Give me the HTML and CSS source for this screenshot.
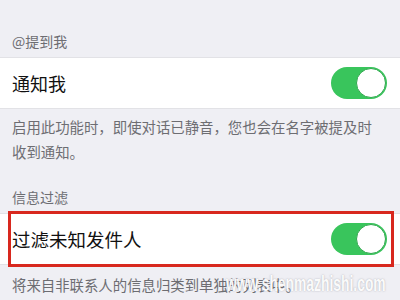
FILE: index.html
```html
<!DOCTYPE html>
<html lang="zh">
<head>
<meta charset="utf-8">
<link rel="stylesheet" href="styles.css">
</head>
<body>
<div class="page">
  <div class="group-header">@提到我</div>
  <div class="row">
    <span class="row-label">通知我</span>
    <span class="switch"><span class="knob"></span></span>
  </div>
  <div class="group-footer">启用此功能时，即使对话已静音，您也会在名字被提及时收到通知。</div>

  <div class="group-header group-header--second">信息过滤</div>
  <div class="row row--marked">
    <span class="row-label row-label--wide">过滤未知发件人</span>
    <span class="switch"><span class="knob"></span></span>
  </div>
  <div class="group-footer group-footer--last">将来自非联系人的信息归类到单独的列表中。</div>

  <div class="watermark">www.shenmazhishi.com</div>
</div>
</body>
</html>
```

FILE: styles.css
```css
html, body {
  margin: 0;
  padding: 0;
  background: #efeff4;
}
body {
  width: 400px;
  height: 300px;
  overflow: hidden;
  font-family: "Noto Sans CJK SC", "Noto Sans", sans-serif;
}
.page {
  position: relative;
  width: 400px;
  height: 300px;
}
.group-header {
  padding: 30px 12px 5px;
  font-size: 14px;
  line-height: 22px;
  color: #6d6d72;
}
.group-header--second {
  padding-top: 22px;
}
.row {
  position: relative;
  height: 52px;
  box-sizing: border-box;
  background: #ffffff;
  border-top: 1px solid #e2e2e6;
  border-bottom: 1px solid #e2e2e6;
  display: flex;
  align-items: center;
  justify-content: space-between;
  padding: 0 13px 0 12px;
}
.row-label {
  font-size: 18px;
  color: #111111;
}
.row-label--wide {
  font-size: 18.5px;
}
.row--marked::after {
  content: "";
  position: absolute;
  left: 8px;
  right: 6px;
  top: -3px;
  bottom: -3px;
  border: 3px solid #d8281e;
}
.switch {
  position: relative;
  width: 56px;
  height: 32px;
  border-radius: 16px;
  background: #39c55c;
  box-sizing: border-box;
}
.knob {
  position: absolute;
  right: 1px;
  top: 1px;
  width: 30px;
  height: 30px;
  border-radius: 50%;
  background: #ffffff;
  box-sizing: border-box;
  border: 1px solid #2fa84d;
}
.group-footer {
  padding: 5px 12px 0;
  font-size: 14.4px;
  line-height: 25px;
  color: #6d6d72;
  width: 372px;
}
.group-footer--last {
  padding-top: 7px;
}
.watermark {
  position: absolute;
  left: 226px;
  top: 271px;
  font-family: "Liberation Sans", Arial, sans-serif;
  font-weight: bold;
  font-size: 22px;
  line-height: 26px;
  color: rgba(255, 255, 255, 0.95);
  text-shadow: 0 0 2px rgba(110, 110, 120, 0.55);
  transform: scaleX(0.63);
  transform-origin: left top;
  white-space: nowrap;
}
```
